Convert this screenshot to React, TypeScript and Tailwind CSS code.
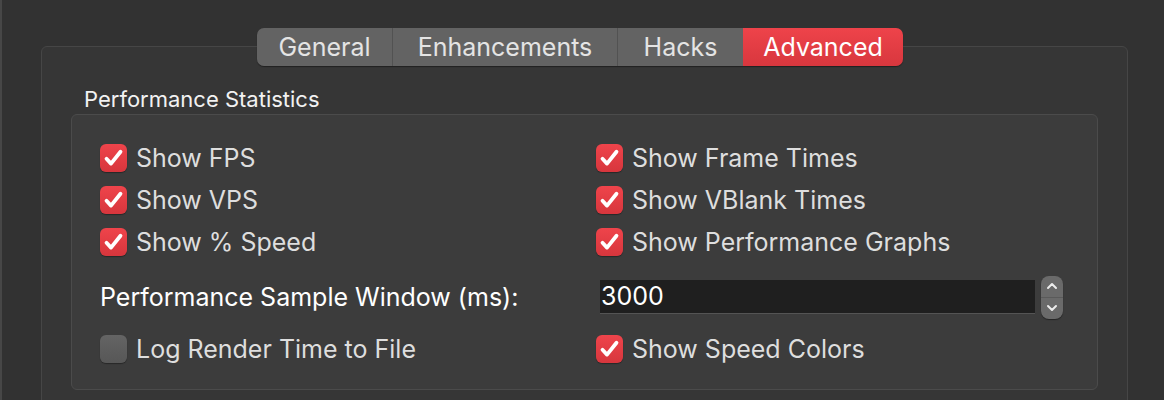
import React from 'react';

const font = { fontFamily: 'Inter, "Noto Sans", "Liberation Sans", sans-serif' };

const Check = ({ checked }: { checked: boolean }) =>
  checked ? (
    <div className="w-[27px] h-[28px] rounded-[6px] bg-gradient-to-b from-[#ef444b] to-[#d7363d] shadow-[0_1px_1px_rgba(0,0,0,0.35)] flex items-center justify-center shrink-0">
      <svg width="27" height="28" viewBox="0 0 27 28">
        <path d="M6.5 14.8 L11 19.6 L20.5 7.8" fill="none" stroke="#ffffff" strokeWidth="3.8" strokeLinecap="round" strokeLinejoin="round" />
      </svg>
    </div>
  ) : (
    <div className="w-[27px] h-[28px] rounded-[6px] bg-gradient-to-b from-[#646464] to-[#575757] shadow-[0_1px_1px_rgba(0,0,0,0.35)] shrink-0" />
  );

const Option = ({ label, checked = true }: { label: string; checked?: boolean }) => (
  <div className="flex items-center gap-[9px]">
    <Check checked={checked} />
    <span className="text-[25px] leading-none text-[#dedede]">{label}</span>
  </div>
);

const tabs = [
  { name: 'General', w: 'w-[135px]' },
  { name: 'Enhancements', w: 'w-[225px]' },
  { name: 'Hacks', w: 'w-[126px]' },
  { name: 'Advanced', w: 'w-[160px]' },
];

export default function App() {
  return (
    <div style={font} className="w-[1164px] h-[400px] overflow-hidden bg-[#323232] border-l-2 border-[#474747]">
      <div className="pt-[28px] pl-[39px]">
        {/* Tabs */}
        <div className="relative z-10 ml-[216px] flex h-[38px] rounded-[7px] overflow-hidden w-fit shadow-[0_1px_1px_rgba(0,0,0,0.4)]">
          {tabs.map((t, i) => (
            <div
              key={t.name}
              className={`${t.w} flex items-center justify-center text-[25px] leading-none ${
                t.name === 'Advanced'
                  ? 'bg-gradient-to-b from-[#ee434a] to-[#d8373e] text-white'
                  : 'bg-[#636363] text-[#e4e4e4]'
              } ${i > 0 && i < 3 ? 'border-l border-[#525252]' : ''}`}
            >
              {t.name}
            </div>
          ))}
        </div>

        {/* Outer group */}
        <div className="-mt-[20px] w-[1087px] h-[400px] border border-[#464646] rounded-[6px] bg-[#363636] pt-[39px]">
          <div className="ml-[42px] h-[26px] flex items-center text-[22px] text-[#f2f2f2] leading-none">
            Performance Statistics
          </div>
          <div className="ml-[29px] mt-[2px] w-[1027px] border border-[#4b4b4b] rounded-[6px] bg-[#3c3c3c] pt-[22px] pb-[22px] pl-[28px]">
            <div className="grid grid-cols-[496px_1fr]">
              <div className="h-[42px] flex items-center"><Option label="Show FPS" /></div>
              <div className="h-[42px] flex items-center"><Option label="Show Frame Times" /></div>
              <div className="h-[42px] flex items-center"><Option label="Show VPS" /></div>
              <div className="h-[42px] flex items-center"><Option label="Show VBlank Times" /></div>
              <div className="h-[42px] flex items-center"><Option label="Show % Speed" /></div>
              <div className="h-[42px] flex items-center"><Option label="Show Performance Graphs" /></div>

              <div className="h-[68px] flex items-center text-[25px] leading-none text-white">
                Performance Sample Window (ms):
              </div>
              <div className="h-[68px] flex items-center">
                <div className="ml-[4px] w-[435px] h-[34px] bg-[#1f1f1f] border-b border-[#545454] flex items-center pl-[1px] text-[25px] leading-none text-white">
                  3000
                </div>
                <div className="ml-[6px] w-[22px] h-[43px] rounded-[8px] bg-[#6a6a6a] flex flex-col shadow-[0_1px_1px_rgba(0,0,0,0.4)]">
                  <div className="flex-1 flex items-center justify-center border-b border-[#5a5a5a]">
                    <svg width="12" height="8" viewBox="0 0 12 8">
                      <path d="M2 6 L6 2 L10 6" fill="none" stroke="#ececec" strokeWidth="2" strokeLinecap="round" strokeLinejoin="round" />
                    </svg>
                  </div>
                  <div className="flex-1 flex items-center justify-center">
                    <svg width="12" height="8" viewBox="0 0 12 8">
                      <path d="M2 2 L6 6 L10 2" fill="none" stroke="#ececec" strokeWidth="2" strokeLinecap="round" strokeLinejoin="round" />
                    </svg>
                  </div>
                </div>
              </div>

              <div className="h-[36px] flex items-center"><Option label="Log Render Time to File" checked={false} /></div>
              <div className="h-[36px] flex items-center"><Option label="Show Speed Colors" /></div>
            </div>
          </div>
        </div>
      </div>
    </div>
  );
}
